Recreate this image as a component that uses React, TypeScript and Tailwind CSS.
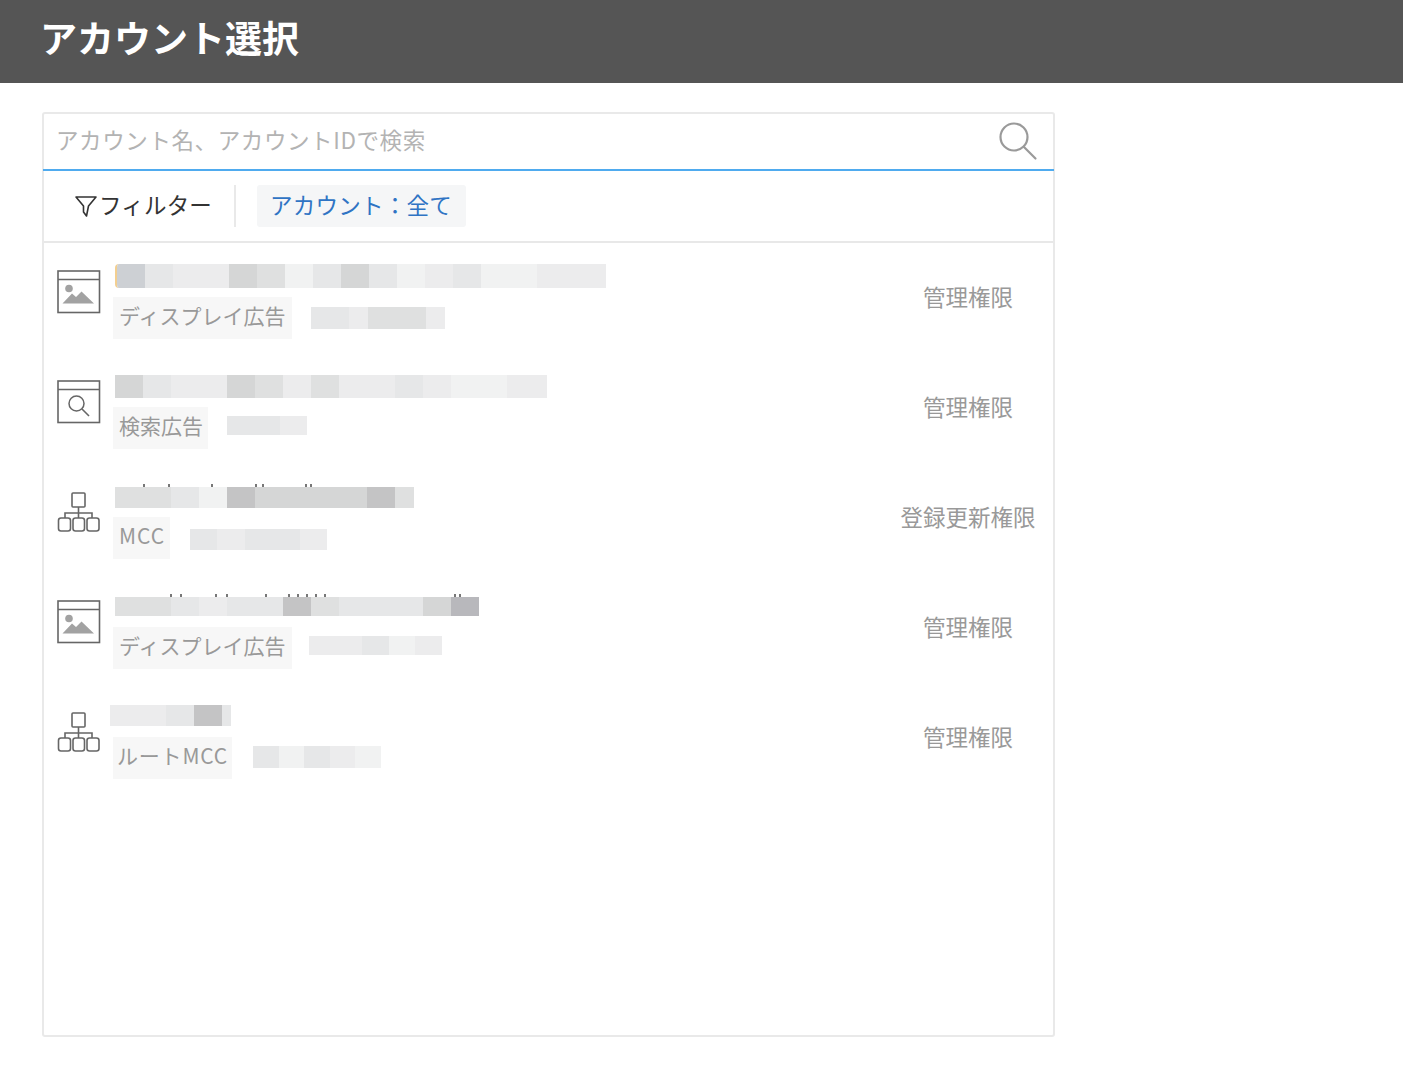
import React from 'react';

const a = 'bg-[#f1f2f2]';
const b = 'bg-[#ececed]';
const c = 'bg-[#e6e7e8]';
const d = 'bg-[#dfe0e0]';
const e = 'bg-[#d5d6d6]';
const f = 'bg-[#cdd0d4]';
const g = 'bg-[#c4c4c5]';
const h = 'bg-[#b8b8bc]';

type Kind = 'image' | 'search' | 'network';

type Row = {
  kind: Kind;
  tag: string;
  role: string;
  name: string[];
  nameBox: string;
  id: string[];
  idBox: string;
  tagBox: string;
  dots?: string[];
};

const rows: Row[] = [
  {
    kind: 'image',
    tag: 'ディスプレイ広告',
    role: '管理権限',
    name: [f, c, b, b, e, d, a, c, e, c, a, b, c, a, a, b, b, b],
    nameBox: 'mt-[4px] ml-[2px] h-[24px] w-[491px] border-l-2 border-[#f3cf90] rounded-l-sm',
    tagBox: 'w-[179px] pl-[6px]',
    id: [c, c, b, d, d, d, b],
    idBox: 'ml-[19px] mt-[10px] h-[22px] w-[134px]',
  },
  {
    kind: 'search',
    tag: '検索広告',
    role: '管理権限',
    name: [e, c, b, b, e, d, b, d, b, b, c, b, a, a, b, b],
    nameBox: 'mt-[5px] ml-[2px] h-[23px] w-[432px]',
    tagBox: 'w-[95px] pl-[6px]',
    id: [c, c, b],
    idBox: 'ml-[19px] mt-[9px] h-[19px] w-[80px]',
  },
  {
    kind: 'network',
    tag: 'MCC',
    role: '登録更新権限',
    name: [d, d, c, a, g, e, e, e, e, g, d],
    nameBox: 'mt-[7px] ml-[2px] h-[21px] w-[299px]',
    tagBox: 'w-[57px] pl-[6px] tracking-[1px]',
    id: [c, b, c, c, b],
    idBox: 'ml-[20px] mt-[12px] h-[21px] w-[137px]',
    dots: ['ml-[28px]', 'ml-[23px]', 'ml-[41px]', 'ml-[42px]', 'ml-[5px]', 'ml-[41px]', 'ml-[3px]'],
  },
  {
    kind: 'image',
    tag: 'ディスプレイ広告',
    role: '管理権限',
    name: [d, d, c, b, c, c, g, d, c, c, c, e, h],
    nameBox: 'mt-[7px] ml-[2px] h-[19px] w-[364px]',
    tagBox: 'w-[179px] pl-[6px]',
    id: [b, b, c, a, b],
    idBox: 'ml-[17px] mt-[9px] h-[19px] w-[133px]',
    dots: ['ml-[55px]', 'ml-[8px]', 'ml-[33px]', 'ml-[9px]', 'ml-[37px]', 'ml-[21px]', 'ml-[7px]', 'ml-[7px]', 'ml-[7px]', 'ml-[7px]', 'ml-[128px]', 'ml-[3px]'],
  },
  {
    kind: 'network',
    tag: 'ルートMCC',
    role: '管理権限',
    name: [b, b, c, g, c],
    nameBox: 'mt-[5px] -ml-[3px] h-[21px] w-[121px]',
    tagBox: 'w-[119px] pl-[4px] tracking-[0.8px]',
    id: [c, a, c, b, a],
    idBox: 'ml-[21px] mt-[9px] h-[22px] w-[128px]',
  },
];

const AccountIcon = ({ kind }: { kind: Kind }) => {
  if (kind === 'network') {
    return (
      <svg width="44" height="44" viewBox="0 0 44 44" fill="none" stroke="#666" strokeWidth="1.6" className="mt-[10px]">
        <rect x="15" y="3" width="13" height="14" rx="1" />
        <path d="M21.5 17v11M8 28v-5h27v5" />
        <rect x="1.5" y="28" width="12" height="13" rx="2.5" />
        <rect x="16" y="28" width="11.5" height="13" rx="2.5" />
        <rect x="30" y="28" width="12" height="13" rx="2.5" />
      </svg>
    );
  }
  return (
    <svg width="44" height="44" viewBox="0 0 44 44" fill="none" className="mt-[10px]">
      <rect x="1" y="1" width="41.5" height="41.5" stroke="#666" strokeWidth="1.6" />
      <path d="M1 9.5h41.5" stroke="#666" strokeWidth="1.4" />
      {kind === 'image' ? (
        <>
          <circle cx="12" cy="18.5" r="3.8" fill="#a2a2a2" />
          <path d="M5.5 33.5 15 23.5l4 3.5 5.5-5.5 12.5 12z" fill="#a2a2a2" />
        </>
      ) : (
        <>
          <circle cx="19.5" cy="23.5" r="7.5" stroke="#666" strokeWidth="1.5" />
          <path d="m25 29 7 7" stroke="#666" strokeWidth="1.6" />
        </>
      )}
    </svg>
  );
};

const App: React.FC = () => {
  return (
    <div className="min-h-[1081px] bg-white font-['Noto_Sans_CJK_JP','Noto_Sans',sans-serif] text-[22.5px]">
      <header className="h-[83px] bg-[#555555] pl-[40px] flex items-center">
        <h1 className="text-[37px] font-bold text-white leading-none -mt-[9px]">アカウント選択</h1>
      </header>

      <main className="ml-[42px] mt-[29px] w-[1013px] h-[925px] border-2 border-[#e9e9e9] rounded-[3px] flex flex-col">
        <div className="h-[57px] shrink-0 border-b-2 border-[#4fabef] pl-[13px] pr-[16px] flex items-center justify-between -mx-[1px]">
          <input
            readOnly
            placeholder="アカウント名、アカウントIDで検索"
            className="flex-1 bg-transparent outline-none text-[22.5px] tracking-[0.6px] -mt-[4px] placeholder:text-[#b3b3b3]"
          />
          <svg width="40" height="40" viewBox="0 0 40 40" fill="none" stroke="#9a9a9a" strokeWidth="2.2" className="-mt-[1px]">
            <circle cx="16" cy="16" r="13.5" />
            <path d="m26 26 11.5 11.5" strokeLinecap="round" />
          </svg>
        </div>

        <div className="h-[72px] shrink-0 border-b-2 border-[#e8e8e8] flex items-center pl-[30px]">
          <svg width="24" height="24" viewBox="0 0 24 24" fill="none" stroke="#333" strokeWidth="1.6" strokeLinejoin="round" className="mr-[1px]">
            <path d="M2 3h20l-7.5 9-2 10-3-4v-6z" />
          </svg>
          <span className="text-[#333333] leading-none pb-[4px] tracking-[0.2px]">フィルター</span>
          <div className="w-[2px] h-[42px] bg-[#e9e9e9] ml-[22px] mr-[21px]" />
          <div className="h-[42px] w-[209px] rounded-[3px] bg-[#f5f6f7] pl-[13px] pb-[3px] flex items-center text-[#2f74c4] tracking-[0.25px] whitespace-nowrap">
            アカウント：全て
          </div>
        </div>

        <div className="pt-[17px] flex flex-col">
          {rows.map((row, i) => (
            <div key={i} className="h-[110px] flex pl-[13px]">
              <div className="w-[44px] shrink-0">
                <AccountIcon kind={row.kind} />
              </div>
              <div className="flex-1 pl-[12px] text-[#999999]">
                <div className="h-[37px] relative flex flex-col">
                  <div className={`flex overflow-hidden shrink-0 ${row.nameBox}`}>
                    {row.name.map((cell, j) => (
                      <div key={j} className={`h-full w-[28px] shrink-0 ${cell}`} />
                    ))}
                  </div>
                  {row.dots && (
                    <div className="absolute left-[2px] top-[4px] flex">
                      {row.dots.map((gap, j) => (
                        <span key={j} className={`w-[2px] h-[3px] bg-[#777777] ${gap}`} />
                      ))}
                    </div>
                  )}
                </div>
                <div className="flex">
                  <div className={`h-[42px] bg-[#f7f7f7] pb-[5px] text-[21px] flex items-center whitespace-nowrap leading-none ${row.tagBox}`}>
                    {row.tag}
                  </div>
                  <div className={`flex overflow-hidden ${row.idBox}`}>
                    {row.id.map((cell, j) => (
                      <div key={j} className={`h-full flex-1 ${cell}`} />
                    ))}
                  </div>
                </div>
              </div>
              <div className="w-[140px] shrink-0 mr-[15px] pt-[21px] text-center text-[#999999] leading-[30px]">
                {row.role}
              </div>
            </div>
          ))}
        </div>
      </main>
    </div>
  );
};

export default App;
